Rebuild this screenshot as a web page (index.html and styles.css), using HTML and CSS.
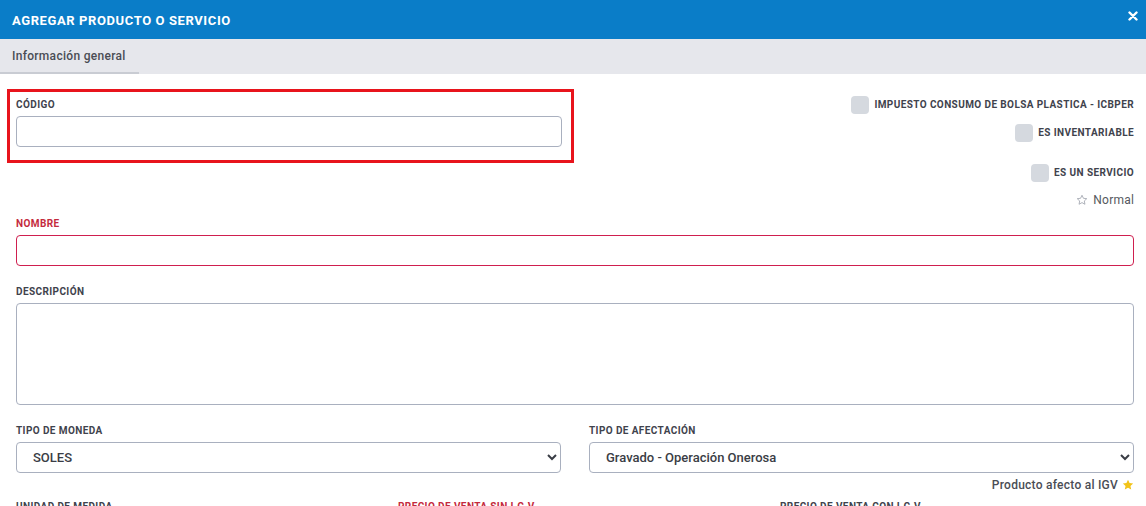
FILE: index.html
```html
<!DOCTYPE html>
<html lang="es">
<head>
<meta charset="utf-8">
<title>Agregar producto o servicio</title>
<link rel="stylesheet" href="styles.css">
</head>
<body>
<div class="modal">
  <header class="modal-header">
    <h1 class="modal-title">AGREGAR PRODUCTO O SERVICIO</h1>
    <button class="close-btn" aria-label="Cerrar">
      <svg width="10" height="10" viewBox="0 0 10 10"><path d="M1.5 1.5 L8.5 8.5 M8.5 1.5 L1.5 8.5" stroke="#fff" stroke-width="2.4" stroke-linecap="round"/></svg>
    </button>
  </header>
  <nav class="tabs">
    <div class="tab active">Información general</div>
  </nav>
  <main class="content">
    <div class="top-row">
      <div class="highlight">
        <label class="label">CÓDIGO</label>
        <input class="input" type="text">
      </div>
      <div class="options">
        <div class="check-row r1"><span class="check"></span><span class="check-text">IMPUESTO CONSUMO DE BOLSA PLASTICA - ICBPER</span></div>
        <div class="check-row r2"><span class="check"></span><span class="check-text">ES INVENTARIABLE</span></div>
        <div class="check-row r3"><span class="check"></span><span class="check-text">ES UN SERVICIO</span></div>
        <div class="normal">
          <svg width="12" height="12" viewBox="0 0 24 24"><path d="M12 2.5 L14.9 8.6 L21.5 9.4 L16.6 13.9 L17.9 20.5 L12 17.2 L6.1 20.5 L7.4 13.9 L2.5 9.4 L9.1 8.6 Z" fill="none" stroke="#9aa0aa" stroke-width="1.6" stroke-linejoin="round"/></svg>
          <span>Normal</span>
        </div>
      </div>
    </div>

    <div class="field f-nombre">
      <label class="label required">NOMBRE</label>
      <input class="input input-required" type="text">
    </div>

    <div class="field f-desc">
      <label class="label">DESCRIPCIÓN</label>
      <textarea class="input textarea"></textarea>
    </div>

    <div class="grid2">
      <div class="field">
        <label class="label">TIPO DE MONEDA</label>
        <select class="input select"><option>SOLES</option></select>
      </div>
      <div class="field">
        <label class="label">TIPO DE AFECTACIÓN</label>
        <select class="input select"><option>Gravado - Operación Onerosa</option></select>
        <div class="afecto">Producto afecto al IGV
          <svg width="12" height="12" viewBox="0 0 24 24"><path d="M12 1.5 L15.1 8.1 L22.3 8.9 L16.9 13.8 L18.4 21 L12 17.4 L5.6 21 L7.1 13.8 L1.7 8.9 L8.9 8.1 Z" fill="#f2c318"/></svg>
        </div>
      </div>
    </div>

    <div class="grid3">
      <label class="label">UNIDAD DE MEDIDA</label>
      <label class="label required">PRECIO DE VENTA SIN I.G.V.</label>
      <label class="label">PRECIO DE VENTA CON I.G.V.</label>
    </div>
  </main>
</div>
</body>
</html>
```
FILE: styles.css
```css
* { box-sizing: border-box; }
html, body { margin: 0; padding: 0; background: #fff; }
body {
  font-family: Roboto, "Liberation Sans", Arial, sans-serif;
  color: #3f434d;
  overflow: hidden;
}
.modal { width: 1146px; }

.modal-header {
  height: 39px;
  background: #0a7dc8;
  display: flex;
  align-items: center;
  justify-content: space-between;
  padding: 0 8px 0 12px;
}
.modal-title {
  margin: 0;
  font-size: 13px;
  font-weight: 700;
  color: #fff;
  letter-spacing: 0.6px;
  padding-top: 1px;
}
.close-btn {
  background: none;
  border: 0;
  padding: 0;
  width: 10px;
  height: 10px;
  margin-bottom: 8px;
  display: flex;
}

.tabs {
  height: 35px;
  background: #e6e7ec;
  display: flex;
  align-items: stretch;
}
.tab {
  width: 139px;
  padding: 1px 12px 0;
  display: flex;
  align-items: center;
  font-size: 12px;
  font-weight: 500;
  letter-spacing: 0.3px;
  color: #4a4d55;
  border-bottom: 2px solid #c9ccd3;
}

.content { padding: 15px 12px 0 16px; }

.top-row {
  display: flex;
  justify-content: space-between;
  align-items: flex-start;
}
.highlight {
  margin-left: -9px;
  width: 567px;
  border: 3px solid #e8141c;
  padding: 6px 9px 13px 6px;
  display: flex;
  flex-direction: column;
}
.label {
  display: block;
  font-size: 10px;
  line-height: 12px;
  font-weight: 700;
  letter-spacing: 0.4px;
  color: #3f434d;
  padding-top: 1px;
  margin-bottom: 5px;
}
.label.required { color: #c42a3d; }

.input {
  display: block;
  width: 100%;
  height: 31px;
  border: 1px solid #a9b0bf;
  border-radius: 4px;
  background: #fff;
  font-family: Roboto, "Liberation Sans", Arial, sans-serif;
  margin: 0;
  outline: none;
}
.input-required { border-color: #cf1f4f; }
.textarea { height: 102px; resize: none; }
.select {
  font-size: 13px;
  font-weight: 500;
  color: #3a3d45;
  padding: 0 4px 0 12px;
}

.options {
  margin-top: 7px;
  display: flex;
  flex-direction: column;
  align-items: flex-end;
}
.check-row {
  display: flex;
  align-items: center;
  gap: 5px;
}
.r2 { margin-top: 10px; }
.r3 { margin-top: 22px; }
.check {
  width: 18px;
  height: 18px;
  border-radius: 4px;
  background: #d5d9df;
}
.check-text {
  font-size: 10px;
  font-weight: 700;
  letter-spacing: 0.4px;
  color: #3f434d;
  line-height: 12px;
}
.normal {
  margin-top: 11px;
  display: flex;
  align-items: center;
  gap: 5px;
  font-size: 12px;
  line-height: 14px;
  letter-spacing: 0.2px;
  color: #555960;
}

.field { display: flex; flex-direction: column; }
.f-nombre { margin-top: 10px; }
.f-desc { margin-top: 19px; }

.grid2 {
  margin-top: 19px;
  display: grid;
  grid-template-columns: 1fr 1fr;
  column-gap: 28px;
}
.afecto {
  margin-top: 5px;
  display: flex;
  justify-content: flex-end;
  align-items: center;
  gap: 4px;
  font-size: 12px;
  line-height: 14px;
  font-weight: 500;
  letter-spacing: 0.25px;
  color: #4a4d55;
}

.grid3 {
  margin-top: 8px;
  display: grid;
  grid-template-columns: 1fr 1fr 1fr;
  column-gap: 28px;
}
```
